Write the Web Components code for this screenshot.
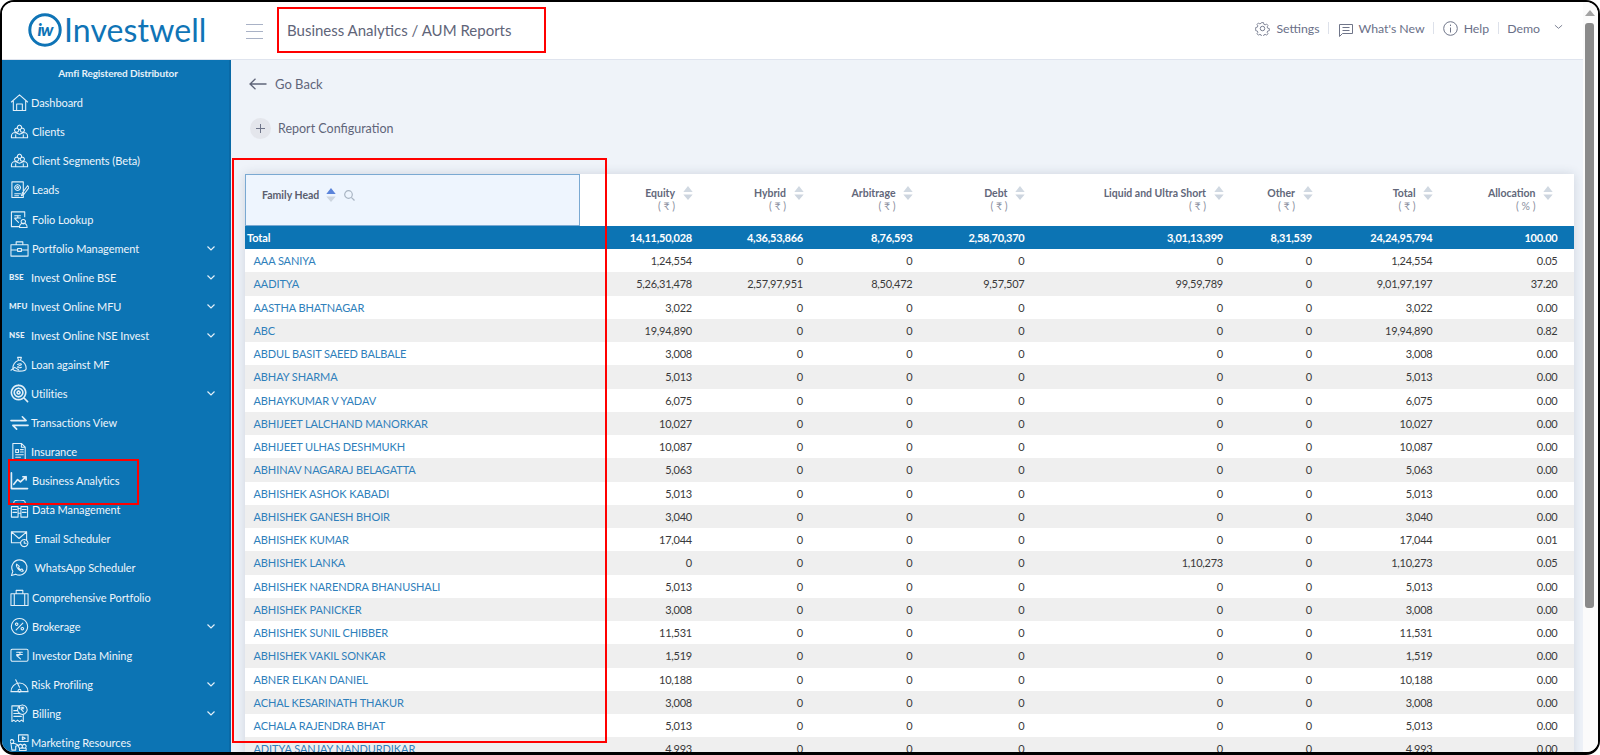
<!DOCTYPE html>
<html lang="en">
<head>
<meta charset="utf-8">
<title>Business Analytics / AUM Reports</title>
<style>
  html, body { margin: 0; height: 755px; overflow: hidden; background: #fff; font-family: Lato, "Noto Sans", sans-serif; }
</style>
</head>
<body>
<iw-app>
  <top-bar slot="top" page="Business Analytics / AUM Reports"></top-bar>
  <side-nav slot="side"></side-nav>
  <report-page slot="main"></report-page>
  <red-mark style="left:275px;top:5px;width:269px;height:46px"></red-mark>
  <red-mark style="left:230px;top:156px;width:375px;height:585px"></red-mark>
  <red-mark style="left:6px;top:457px;width:131px;height:46px"></red-mark>
</iw-app>

<script>
// Page frame: black rounded window, header on top, sidebar + content, fake scrollbar
class IwApp extends HTMLElement {
  constructor() {
    super();
    this.attachShadow({ mode: "open" });
  }
  connectedCallback() {
    this.shadowRoot.innerHTML = `
      <style>
        :host {
          display: block;
          position: relative;
          box-sizing: border-box;
          width: 1600px;
          height: 755px;
          border: 2px solid #000;
          border-bottom-width: 3px;
          border-radius: 14px;
          overflow: hidden;
          background: #fff;
        }
        .shell { display: flex; height: 100%; }
        .left { flex: 1; min-width: 0; display: flex; flex-direction: column; }
        .body { flex: 1; min-height: 0; display: flex; }
        .bar { width: 15px; flex: none; background: #fbfbfb; display: flex; flex-direction: column; align-items: center; }
        .arrow { width: 0; height: 0; margin: 8px 0 7px -2px; border: 5px solid transparent; border-top: 0; border-bottom: 6px solid #a3a3a3; }
        .thumb { width: 9px; height: 585px; margin-left: -2px; background: #8a8a8a; border-radius: 3px; }
      </style>
      <div class="shell">
        <div class="left">
          <slot name="top"></slot>
          <div class="body">
            <slot name="side"></slot>
            <slot name="main"></slot>
          </div>
        </div>
        <div class="bar"><div class="arrow"></div><div class="thumb"></div></div>
      </div>
      <slot></slot>
    `;
  }
}

// Red annotation rectangle drawn over the screenshot
class RedMark extends HTMLElement {
  constructor() {
    super();
    const shadow = this.attachShadow({ mode: "open" });
    shadow.innerHTML = `
      <style>
        :host { display: block; position: absolute; box-sizing: border-box; border: 2px solid #f00; pointer-events: none; }
      </style>
    `;
  }
}

class TopBar extends HTMLElement {
  constructor() {
    super();
    this.attachShadow({ mode: "open" });
  }
  connectedCallback() {
    this.shadowRoot.innerHTML = `
      <style>
        :host {
          display: flex;
          align-items: center;
          flex: none;
          box-sizing: border-box;
          height: 58px;
          background: #fff;
          border-bottom: 1px solid #dfe4ee;
          font-family: Lato, "Noto Sans", sans-serif;
          color: #6a7088;
        }
        .logo { width: 229px; flex: none; box-sizing: border-box; padding: 0 0 1px 26px; display: flex; align-items: center; gap: 2px; }
        .word { font-size: 32px; color: #0f74b6; line-height: 34px; letter-spacing: .1px; }
        .burger { width: 17px; height: 15px; margin: 1px 24px 0 15px; flex: none; display: flex; flex-direction: column; justify-content: space-between; }
        .burger i { display: block; height: 1px; background: #a9b2c6; }
        .title { font-size: 15px; color: #5f6579; flex: 1; margin-bottom: 1px; }
        .links { display: flex; align-items: center; font-size: 12.300px; padding-right: 20px; margin-bottom: 5px; }
        .links span { display: inline-flex; align-items: center; }
        .links svg { flex: none; fill: none; stroke: #6f7589; stroke-width: 1; }
        .sep { width: 1px; height: 12px; background: #dde1ea; margin: 0 8.500px; }
      </style>
      <div class="logo">
        <svg width="34" height="34" viewBox="0 0 34 34">
          <circle cx="17" cy="17" r="15.200" fill="none" stroke="#0f74b6" stroke-width="3"/>
          <text x="17" y="22.500" text-anchor="middle" font-family="Lato, sans-serif" font-size="17" font-style="italic" font-weight="900" fill="#0f74b6" letter-spacing="-1">iw</text>
        </svg>
        <span class="word">Investwell</span>
      </div>
      <div class="burger"><i></i><i></i><i></i></div>
      <div class="title">${this.getAttribute("page")}</div>
      <div class="links">
        <span>
          <svg width="15" height="15" viewBox="0 0 16 16" style="margin-right:6px"><circle cx="8" cy="8" r="2.400"/><path d="M6.800 1h2.400l.4 2 1.500.7 1.800-1 1.600 1.700-1 1.700.6 1.500 2 .5v2.400l-2 .5-.6 1.500 1 1.700-1.600 1.700-1.800-1-1.500.7-.4 2H6.800l-.4-2-1.500-.7-1.800 1-1.600-1.700 1-1.700-.6-1.500-2-.5V6.900l2-.5.6-1.500-1-1.700 1.600-1.700 1.800 1 1.500-.7z" transform="translate(.8 .8) scale(.9)"/></svg>
          Settings
        </span>
        <i class="sep"></i>
        <span>
          <svg width="14" height="14" viewBox="0 0 14 14" style="margin:3px 6px 0 1px"><path d="M.5 1.500h13v9h-10L.5 13.500zM3.500 4.500h7M3.500 7.500h7"/></svg>
          What's New
        </span>
        <i class="sep"></i>
        <span>
          <svg width="15" height="15" viewBox="0 0 15 15" style="margin:0 6px 0 0"><circle cx="7.500" cy="7.500" r="6.800"/><path d="M7.500 6.500v5M7.500 3.600v1.400"/></svg>
          Help
        </span>
        <i class="sep"></i>
        <span>Demo</span>
        <svg width="9" height="6" viewBox="0 0 10 6" style="margin-left:14px;margin-top:-2px"><path d="M1 1l4 3.500L9 1"/></svg>
      </div>
    `;
  }
}

// One sidebar line: icon (slot), label (slot), optional chevron
class NavItem extends HTMLElement {
  constructor() {
    super();
    this.attachShadow({ mode: "open" });
  }
  connectedCallback() {
    const open = this.hasAttribute("open") ? `<svg class="chev" width="8" height="5" viewBox="0 0 8 5"><path d="M.5.5 4 4 7.500.5"/></svg>` : "";
    this.shadowRoot.innerHTML = `
      <style>
        :host {
          display: flex;
          align-items: center;
          flex: none;
          position: relative;
          height: 29.080px;
          font-size: 11px;
          letter-spacing: -.05px;
          color: #eef5fb;
          white-space: nowrap;
        }
        .icon { width: var(--label, 29px); flex: none; box-sizing: border-box; padding-left: 8px; display: flex; align-items: center; }
        .text { flex: 1; }
        .chev { margin-right: 14px; fill: none; stroke: #e3eff8; stroke-width: 1.200; }
      </style>
      <div class="icon"><slot name="icon"></slot></div>
      <div class="text"><slot></slot></div>
      ${open}
    `;
  }
}

// stroke paths for the sidebar icons, viewBox 0 0 20 20
const NAV_ICONS = {
  home: "M1.500 9.500 10 2l8.500 7.500M3.500 8.500V18.500h13V8.500M7 18.500v-7h6v7",
  people: "M7 6.500a2.200 2.200 0 1 0 .01 0M13 6.500a2.200 2.200 0 1 0 .01 0M10 3.500a2.200 2.200 0 1 1-.01 0M1.500 15c0-2.500 2-4 4-4l4.500 2 4.500-2c2 0 4 1.500 4 4v1.500h-17zM6 16.500v-3M14 16.500v-3",
  leads: "M2 2h12v16.500H2zM5 14.500h6M5 16.500h4M8 5a3 3 0 1 0 .01 0M8 7a1 1 0 1 0 .01 0M18.500 6 13 13.500l-1 3 2.700-1.500L20 8z",
  folio: "M1.500 2h14v5M1.500 2v15.500h8M5 6h6M5 8.500h6M8 6c1 1.500 0 3-3 3l4 4M14 10a2.300 2.300 0 1 0 .01 0M10 18.500c0-6 8-6 8 0z",
  case: "M1 6h18v12H1zM6.500 6V3h7v3M1 11.500h7M12 11.500h7M8 10h4v3H8z",
  bag: "M8 2.500h4l-1 3H9zM9 5.500C5 7 3 11 3 14.500c0 2 2 2.500 7 2.500s7-.5 7-2.500c0-3.500-2-7.500-6-9M1 16l4-3 4 2.500M8 10c2-1 4-1 4 0s-4 1-4 2.500 3 1 4 .5",
  target: "M9 1.500a7.500 7.500 0 1 0 .01 0M9 4.500a4.500 4.500 0 1 0 .01 0M9 7.500a1.500 1.500 0 1 0 .01 0M14.500 14.500l4 4",
  swap: "M1 8h16l-4-4M19 13H3l4 4",
  doc: "M3 1.500h9l4 4v13H3zM12 1.500v4h4M6 8h3v3H6zM11 8h3M11 10.500h3M6 13.500h8M6 16h5",
  trend: "M1.500 2v16.500h17M4 14l4-5 3 2.500L17 6M13.500 6H17v3.500",
  data: "M1.500 7h7v11h-7zM11.500 7h7v11h-7zM8.500 9h3M8.500 14h3M4 2.500a6 2.500 0 0 1 12 0M3 10h4M3 13h4M13 10h4M13 13h4",
  mail: "M1.500 3h16v9M1.500 3v11.500h9M1.500 3 9.500 10l8-7M15 11a3.800 3.800 0 1 0 .01 0M15 13v2h2",
  chat: "M10 2a8 8 0 0 0-7 12l-1.500 4.500L6 17a8 8 0 1 0 4-15zM7 6.500c-1 1 .5 4 2 5.500s4 2.500 5 1.500l-1.500-2-1.500.8-2-2 .8-1.500z",
  brief: "M1 6h18v12.500H1zM6.500 6V2.500h7V6M4.500 6v12.500M15.500 6v12.500",
  percent: "M10 1.500a8.500 8.500 0 1 0 .01 0M13.500 6.500l-7 7M7 6.300a1.300 1.300 0 1 0 .01 0M13 11a1.300 1.300 0 1 0 .01 0",
  rupee: "M3 3.500h14.500a1.500 1.500 0 0 1 1.500 1.500v9.500a1.500 1.500 0 0 1-1.500 1.500H2.500A1.500 1.500 0 0 1 1 14.500V5a1.500 1.500 0 0 1 2-1.500zM7 6.500h6M7 9h6M8.500 6.500c3 0 3 3.500-1.500 3.500l4 3.500",
  gauge: "M1 17.500a9 9 0 1 1 18 0zM6 5l4 8M10 15a1.500 1.500 0 1 0 .01 0",
  bill: "M2 2h8v3M2 2v16.500l2-1.500 2 1.500 2-1.500 2 1.500 2-1.500 2 1.500V11M13 1a5 5 0 1 0 .01 0M11.500 3.500h3M11.500 5h3M12 3.500c2 0 2 2-.5 2l2.500 2.500M4 7h3M4 10h6M4 13h8",
  market: "M9 2h10v7H9zM13 4l3 1.500L13 7zM2 7a2 2 0 1 0 .01 0M1 11h4l4 2-3 1v4H2zM11 12a2 2 0 1 0 .01 0M15 12a2 2 0 1 0 .01 0M10 16h7v2.500h-7z"
};
const HEAVY_ICONS = ["trend", "swap", "target"];

class NavIcon extends HTMLElement {
  constructor() {
    super();
    this.attachShadow({ mode: "open" });
  }
  connectedCallback() {
    const name = this.getAttribute("name");
    const width = HEAVY_ICONS.includes(name) ? 1.700 : 1.150;
    this.shadowRoot.innerHTML = `
      <style>
        :host { display: block; width: 19px; height: 19px; }
        svg { display: block; fill: none; stroke: #e2eff8; stroke-width: ${width}; stroke-linejoin: round; stroke-linecap: round; }
      </style>
      <svg width="19" height="19" viewBox="0 0 20 20"><path d="${NAV_ICONS[name]}"/></svg>
    `;
  }
}

class SideNav extends HTMLElement {
  constructor() {
    super();
    this.attachShadow({ mode: "open" });
  }
  connectedCallback() {
    // [label, icon, has submenu, label offset]
    const items = [
      ["Dashboard", "home", false, 29],
      ["Clients", "people", false, 30],
      ["Client Segments (Beta)", "people", false, 30],
      ["Leads", "leads", false, 30],
      ["Folio Lookup", "folio", false, 30],
      ["Portfolio Management", "case", true, 30],
      ["Invest Online BSE", "#BSE", true, 29],
      ["Invest Online MFU", "#MFU", true, 29],
      ["Invest Online NSE Invest", "#NSE", true, 29],
      ["Loan against MF", "bag", false, 29],
      ["Utilities", "target", true, 29],
      ["Transactions View", "swap", false, 29],
      ["Insurance", "doc", false, 29],
      ["Business Analytics", "trend", false, 30],
      ["Data Management", "data", false, 30],
      ["Email Scheduler", "mail", false, 32.500],
      ["WhatsApp Scheduler", "chat", false, 32.500],
      ["Comprehensive Portfolio", "brief", false, 30],
      ["Brokerage", "percent", true, 30],
      ["Investor Data Mining", "rupee", false, 30],
      ["Risk Profiling", "gauge", true, 29],
      ["Billing", "bill", true, 30],
      ["Marketing Resources", "market", false, 29]
    ];
    const html = items.map(([label, icon, sub, x]) => {
      const ic = icon[0] === "#"
        ? `<b slot="icon" class="tag">${icon.slice(1)}</b>`
        : `<nav-icon slot="icon" name="${icon}"></nav-icon>`;
      return `<nav-item ${sub ? "open" : ""} style="--label:${x}px">${ic}${label}</nav-item>`;
    }).join("");
    this.shadowRoot.innerHTML = `
      <style>
        :host {
          display: block;
          width: 229px;
          flex: none;
          box-sizing: border-box;
          background: #0c74b4;
          border-right: 2px solid #0a69a6;
          font-family: Lato, "Noto Sans", sans-serif;
          overflow: hidden;
        }
        .org { height: 28.200px; line-height: 27.500px; text-align: center; font-size: 10px; font-weight: 700; letter-spacing: -.1px; color: #e6f1f9; padding-left: 5px; }
        .tag { font-size: 8px; font-weight: 900; letter-spacing: .2px; color: #e6f1f9; margin-left: -1px; }
      </style>
      <div class="org">Amfi Registered Distributor</div>
      ${html}
    `;
  }
}

// Up + down triangles next to a column title
class SortArrows extends HTMLElement {
  constructor() {
    super();
    this.attachShadow({ mode: "open" });
  }
  connectedCallback() {
    const up = this.hasAttribute("asc") ? "#5b84da" : "#d1d9e2";
    this.shadowRoot.innerHTML = `
      <style>
        :host { display: block; width: 10px; height: 14px; flex: none; }
        svg { display: block; }
      </style>
      <svg width="10" height="14" viewBox="0 0 10 14">
        <path d="M5 0l4.700 6H.3z" fill="${up}"/>
        <path d="M5 14 .3 8.500h9.400z" fill="#cdd5df"/>
      </svg>
    `;
  }
}

class ColHead extends HTMLElement {
  constructor() {
    super();
    this.attachShadow({ mode: "open" });
  }
  connectedCallback() {
    this.shadowRoot.innerHTML = `
      <style>
        :host {
          display: flex;
          justify-content: flex-end;
          align-items: flex-start;
          gap: 7.500px;
          padding: 12.500px var(--pad, 11.500px) 0 0;
          font-size: 10.500px;
          font-weight: 700;
          color: #62677a;
        }
        .txt { text-align: right; line-height: 13px; }
        .unit { color: #8a8f9e; font-weight: 400; display: block; }
        sort-arrows { margin-top: -.5px; }
      </style>
      <div class="txt"><slot></slot><span class="unit"><slot name="unit"></slot></span></div>
      <sort-arrows></sort-arrows>
    `;
  }
}

class AumTable extends HTMLElement {
  constructor() {
    super();
    this.attachShadow({ mode: "open" });
  }
  connectedCallback() {
    const rows = [
      ["AAA SANIYA", "1,24,554", "0", "0", "0", "0", "0", "1,24,554", "0.05"],
      ["AADITYA", "5,26,31,478", "2,57,97,951", "8,50,472", "9,57,507", "99,59,789", "0", "9,01,97,197", "37.20"],
      ["AASTHA BHATNAGAR", "3,022", "0", "0", "0", "0", "0", "3,022", "0.00"],
      ["ABC", "19,94,890", "0", "0", "0", "0", "0", "19,94,890", "0.82"],
      ["ABDUL BASIT SAEED BALBALE", "3,008", "0", "0", "0", "0", "0", "3,008", "0.00"],
      ["ABHAY SHARMA", "5,013", "0", "0", "0", "0", "0", "5,013", "0.00"],
      ["ABHAYKUMAR V YADAV", "6,075", "0", "0", "0", "0", "0", "6,075", "0.00"],
      ["ABHIJEET LALCHAND MANORKAR", "10,027", "0", "0", "0", "0", "0", "10,027", "0.00"],
      ["ABHIJEET ULHAS DESHMUKH", "10,087", "0", "0", "0", "0", "0", "10,087", "0.00"],
      ["ABHINAV NAGARAJ BELAGATTA", "5,063", "0", "0", "0", "0", "0", "5,063", "0.00"],
      ["ABHISHEK ASHOK KABADI", "5,013", "0", "0", "0", "0", "0", "5,013", "0.00"],
      ["ABHISHEK GANESH BHOIR", "3,040", "0", "0", "0", "0", "0", "3,040", "0.00"],
      ["ABHISHEK KUMAR", "17,044", "0", "0", "0", "0", "0", "17,044", "0.01"],
      ["ABHISHEK LANKA", "0", "0", "0", "0", "1,10,273", "0", "1,10,273", "0.05"],
      ["ABHISHEK NARENDRA BHANUSHALI", "5,013", "0", "0", "0", "0", "0", "5,013", "0.00"],
      ["ABHISHEK PANICKER", "3,008", "0", "0", "0", "0", "0", "3,008", "0.00"],
      ["ABHISHEK SUNIL CHIBBER", "11,531", "0", "0", "0", "0", "0", "11,531", "0.00"],
      ["ABHISHEK VAKIL SONKAR", "1,519", "0", "0", "0", "0", "0", "1,519", "0.00"],
      ["ABNER ELKAN DANIEL", "10,188", "0", "0", "0", "0", "0", "10,188", "0.00"],
      ["ACHAL KESARINATH THAKUR", "3,008", "0", "0", "0", "0", "0", "3,008", "0.00"],
      ["ACHALA RAJENDRA BHAT", "5,013", "0", "0", "0", "0", "0", "5,013", "0.00"],
      ["ADITYA SANJAY NANDURDIKAR", "4,993", "0", "0", "0", "0", "0", "4,993", "0.00"]
    ];
    const totals = ["Total", "14,11,50,028", "4,36,53,866", "8,76,593", "2,58,70,370", "3,01,13,399", "8,31,539", "24,24,95,794", "100.00"];
    const cols = [["Equity", "₹"], ["Hybrid", "₹"], ["Arbitrage", "₹"], ["Debt", "₹"], ["Liquid and Ultra Short", "₹"], ["Other", "₹"], ["Total", "₹"], ["Allocation", "%"]];

    const cells = (r) => r.map((v, i) => i === 0 ? `<div class="name">${v}</div>` : `<div class="num">${v}</div>`).join("");
    const heads = cols.map(([t, u], i) =>
      `<col-head ${i === 7 ? 'style="--pad:21px"' : ""}>${t}<span slot="unit">( ${u} )</span></col-head>`).join("");

    this.shadowRoot.innerHTML = `
      <style>
        :host {
          display: block;
          background: #fff;
          box-shadow: 0 0 10px rgba(40, 60, 90, .16);
          font-size: 11px;
          font-family: Lato, "Noto Sans", sans-serif;
          --cols: 335px 124px 111px 109.500px 112px 198.500px 89px 120.500px 1fr;
        }
        .head, .row { display: grid; grid-template-columns: var(--cols); }
        .head { height: 52px; }
        .first {
          box-sizing: border-box;
          background: #eef5fe;
          border: 1px solid #7aa9d2;
          display: flex;
          align-items: flex-start;
          padding: 12px 0 0 16px;
          font-size: 10.500px;
          font-weight: 700;
          color: #5b5f6e;
          line-height: 16px;
        }
        .first sort-arrows { margin: 1px 0 0 7px; }
        .first svg { margin: 3px 0 0 8px; fill: none; stroke: #a9b5c3; stroke-width: 1.200; }
        .row { height: 23.250px; line-height: 23.250px; color: #3a3a3a; }
        .rows .row:nth-child(even) { background: #efefef; }
        .total { height: 23px; line-height: 23px; background: #0c74b4; color: #fff; font-weight: 700; }
        .name { color: #2f80bb; padding-left: 8.500px; white-space: nowrap; letter-spacing: -.1px; }
        .total .name { color: #fff; padding-left: 2px; }
        .num { text-align: right; padding-right: 12px; letter-spacing: -.25px; }
        .num:last-child { padding-right: 16.500px; }
      </style>
      <div class="head">
        <div class="first">
          Family Head
          <sort-arrows asc></sort-arrows>
          <svg width="11" height="11" viewBox="0 0 11 11"><circle cx="4.500" cy="4.500" r="3.800"/><path d="M7.300 7.300l3.200 3.200"/></svg>
        </div>
        ${heads}
      </div>
      <div class="row total">${cells(totals)}</div>
      <div class="rows">
        ${rows.map(r => `<div class="row">${cells(r)}</div>`).join("")}
      </div>
    `;
  }
}

// Content area under the header
class ReportPage extends HTMLElement {
  constructor() {
    super();
    this.attachShadow({ mode: "open" });
  }
  connectedCallback() {
    this.shadowRoot.innerHTML = `
      <style>
        :host {
          display: block;
          flex: 1;
          min-width: 0;
          box-sizing: border-box;
          background: #eff3f9;
          padding: 0 9px 0 14px;
          overflow: hidden;
          font-family: Lato, "Noto Sans", sans-serif;
          color: #5f6579;
        }
        .back { display: flex; align-items: center; height: 20px; margin-top: 14px; padding-left: 4px; font-size: 13px; gap: 8px; }
        .back svg { fill: none; stroke: #5f6579; stroke-width: 1.300; }
        .conf { display: flex; align-items: center; height: 21px; margin-top: 24px; padding-left: 5px; font-size: 12.500px; gap: 7px; }
        .plus { width: 21px; height: 21px; border-radius: 50%; background: #e4e6ec; display: flex; align-items: center; justify-content: center; }
        .plus svg { stroke: #6f7589; stroke-width: 1; }
        aum-table { margin-top: 35px; }
      </style>
      <div class="back">
        <svg width="18" height="12" viewBox="0 0 18 12"><path d="M17.500 6H1M6.500.8 1 6l5.500 5.200"/></svg>
        Go Back
      </div>
      <div class="conf">
        <span class="plus"><svg width="9" height="9" viewBox="0 0 9 9"><path d="M4.500 0v9M0 4.500h9"/></svg></span>
        Report Configuration
      </div>
      <aum-table></aum-table>
    `;
  }
}

customElements.define("red-mark", RedMark);
customElements.define("nav-icon", NavIcon);
customElements.define("nav-item", NavItem);
customElements.define("side-nav", SideNav);
customElements.define("top-bar", TopBar);
customElements.define("sort-arrows", SortArrows);
customElements.define("col-head", ColHead);
customElements.define("aum-table", AumTable);
customElements.define("report-page", ReportPage);
customElements.define("iw-app", IwApp);
</script>
</body>
</html>
